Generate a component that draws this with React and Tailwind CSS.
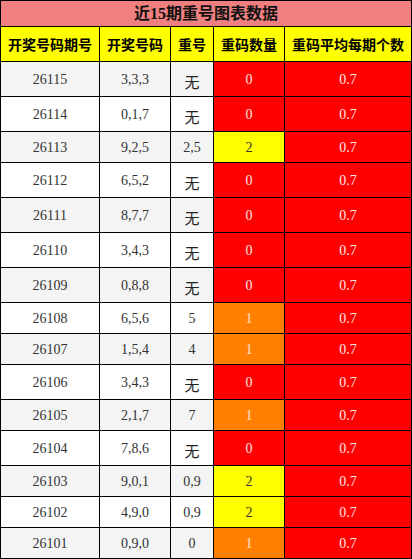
import React from "react";

const rows = [
  ["26115", "3,3,3", "无", 0],
  ["26114", "0,1,7", "无", 0],
  ["26113", "9,2,5", "2,5", 2],
  ["26112", "6,5,2", "无", 0],
  ["26111", "8,7,7", "无", 0],
  ["26110", "3,4,3", "无", 0],
  ["26109", "0,8,8", "无", 0],
  ["26108", "6,5,6", "5", 1],
  ["26107", "1,5,4", "4", 1],
  ["26106", "3,4,3", "无", 0],
  ["26105", "2,1,7", "7", 1],
  ["26104", "7,8,6", "无", 0],
  ["26103", "9,0,1", "0,9", 2],
  ["26102", "4,9,0", "0,9", 2],
  ["26101", "0,9,0", "0", 1],
];

export default function App() {
  return (
    <div className="w-[412px] h-[559px] bg-white font-['Liberation_Serif','Noto_Sans_CJK_SC',serif]">
      <div className="border-l border-t border-black">
        <div className="h-[26px] border-r border-b border-black bg-[#f08080] flex items-center justify-center text-[16px] font-bold text-[#111]">
          近15期重号图表数据
        </div>
        <div className="grid grid-cols-[99px_71px_43px_71px_127px]">
          {["开奖号码期号", "开奖号码", "重号", "重码数量", "重码平均每期个数"].map((h) => (
            <div
              key={h}
              className="h-[35px] border-r border-b border-black bg-[#ffff00] flex items-center justify-center text-[14px] font-bold text-black font-['Noto_Sans_CJK_SC',sans-serif]"
            >
              {h}
            </div>
          ))}
          {rows.map(([id, nums, rep, cnt], i) => {
            const tall = rep === "无";
            const h = tall ? "h-[35px]" : "h-[31px]";
            const bg = i % 2 === 0 ? "bg-[#f4f4f4]" : "bg-white";
            const cntBg =
              cnt === 0
                ? "bg-[#ff0000] text-[#ffe4e4]"
                : cnt === 1
                ? "bg-[#ff8000] text-[#ffe4d0]"
                : "bg-[#ffff00] text-[#333]";
            const cell = `${h} border-r border-b border-black flex items-center justify-center text-[14px]`;
            return (
              <React.Fragment key={id}>
                <div className={`${cell} ${bg} text-[#333]`}>{id}</div>
                <div className={`${cell} ${bg} text-[#333]`}>{nums}</div>
                <div className={`${cell} ${bg} text-[#333]`}>
                  {tall ? (
                    <span className="text-[15px] pt-[6px] text-[#222] font-['Noto_Sans_CJK_SC',sans-serif]">无</span>
                  ) : (
                    rep
                  )}
                </div>
                <div className={`${cell} ${cntBg}`}>{cnt}</div>
                <div className={`${cell} bg-[#ff0000] text-[#ffe4e4]`}>0.7</div>
              </React.Fragment>
            );
          })}
        </div>
      </div>
    </div>
  );
}
